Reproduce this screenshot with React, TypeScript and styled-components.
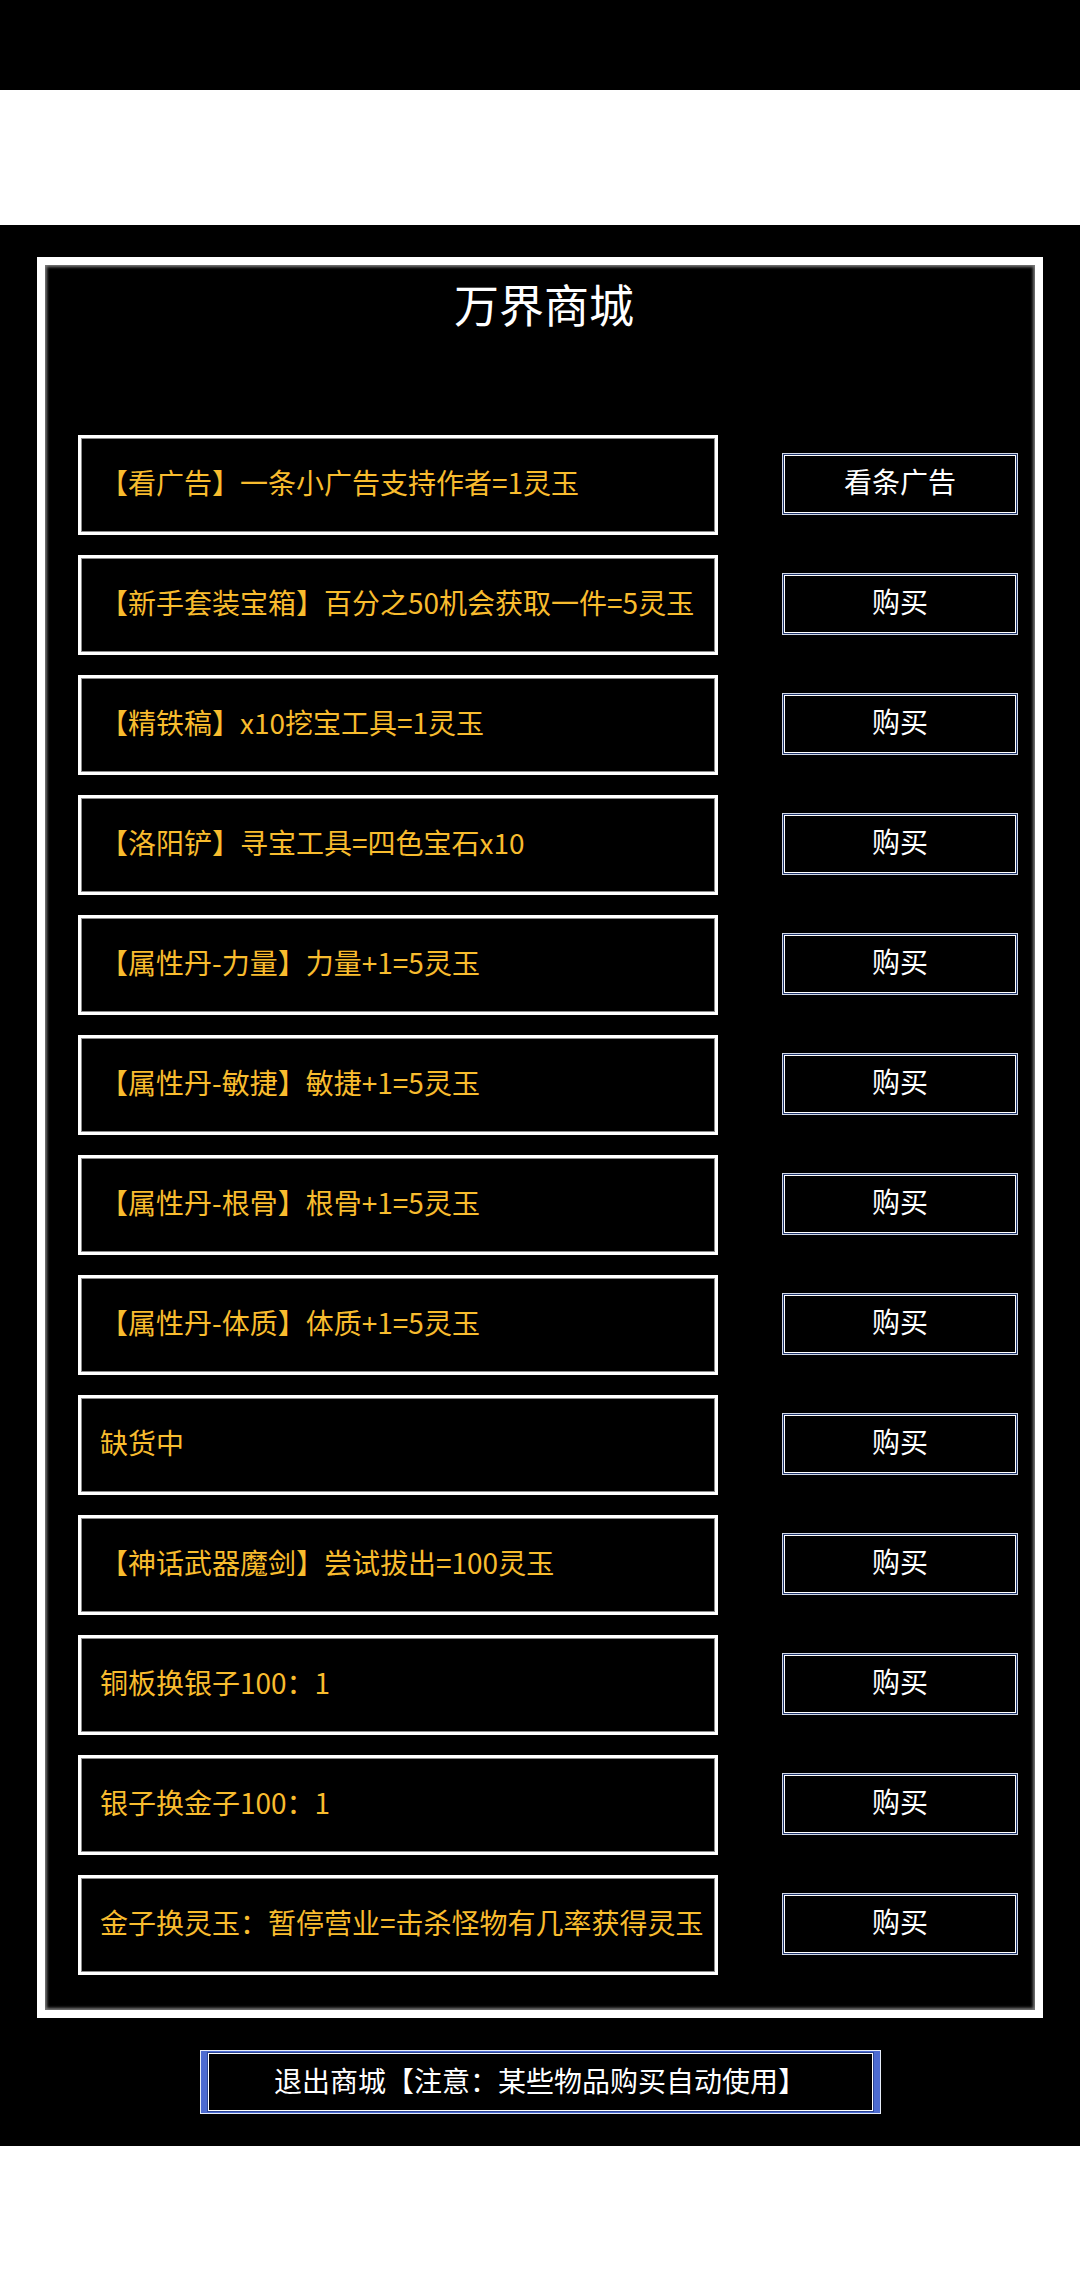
import React from 'react';
import styled, { createGlobalStyle } from 'styled-components';

const GlobalStyle = createGlobalStyle`
  html, body {
    margin: 0;
    padding: 0;
    background: #ffffff;
  }
  body {
    font-family: "Noto Sans CJK SC", "Noto Sans", sans-serif;
  }
  * {
    box-sizing: border-box;
  }
`;

interface IShopItem {
  id: number;
  descricao: string;
  acao: string;
}

const itens: IShopItem[] = [
  { id: 1, descricao: '【看广告】一条小广告支持作者=1灵玉', acao: '看条广告' },
  { id: 2, descricao: '【新手套装宝箱】百分之50机会获取一件=5灵玉', acao: '购买' },
  { id: 3, descricao: '【精铁稿】x10挖宝工具=1灵玉', acao: '购买' },
  { id: 4, descricao: '【洛阳铲】寻宝工具=四色宝石x10', acao: '购买' },
  { id: 5, descricao: '【属性丹-力量】力量+1=5灵玉', acao: '购买' },
  { id: 6, descricao: '【属性丹-敏捷】敏捷+1=5灵玉', acao: '购买' },
  { id: 7, descricao: '【属性丹-根骨】根骨+1=5灵玉', acao: '购买' },
  { id: 8, descricao: '【属性丹-体质】体质+1=5灵玉', acao: '购买' },
  { id: 9, descricao: '缺货中', acao: '购买' },
  { id: 10, descricao: '【神话武器魔剑】尝试拔出=100灵玉', acao: '购买' },
  { id: 11, descricao: '铜板换银子100：1', acao: '购买' },
  { id: 12, descricao: '银子换金子100：1', acao: '购买' },
  { id: 13, descricao: '金子换灵玉：暂停营业=击杀怪物有几率获得灵玉', acao: '购买' },
];

const App: React.FC = () => {
  return (
    <>
      <GlobalStyle />
      <StatusBar />
      <ToolbarBlank />
      <Screen>
        <Panel>
          <Title>万界商城</Title>
          <ItemList>
            {itens.map((item) => (
              <ItemRow key={item.id}>
                <ItemBox>
                  <ItemText>{item.descricao}</ItemText>
                </ItemBox>
                <BuyButton>{item.acao}</BuyButton>
              </ItemRow>
            ))}
          </ItemList>
        </Panel>
        <ExitButton>退出商城【注意：某些物品购买自动使用】</ExitButton>
      </Screen>
    </>
  );
};

const StatusBar = styled.div`
  height: 90px;
  background: #000000;
`;

const ToolbarBlank = styled.div`
  height: 135px;
  background: #ffffff;
`;

const Screen = styled.div`
  background: #000000;
  padding: 32px 37px 33px;
  display: flex;
  flex-direction: column;
  align-items: center;
`;

const Panel = styled.div`
  width: 100%;
  border: 8px solid #ffffff;
  background: #000000;
  box-shadow: inset 0 0 3px 2px #7a7a7a;
  padding: 0 17px 35px 33px;
  display: flex;
  flex-direction: column;
`;

const Title = styled.h1`
  margin: 0 8px 0 0;
  height: 80px;
  line-height: 78px;
  text-align: center;
  color: #ffffff;
  font-size: 45px;
  font-weight: 400;
`;

const ItemList = styled.div`
  margin-top: 90px;
  display: flex;
  flex-direction: column;
  gap: 20px;
`;

const ItemRow = styled.div`
  display: flex;
  align-items: center;
  justify-content: space-between;
  height: 100px;
`;

const ItemBox = styled.div`
  width: 640px;
  height: 100px;
  border: 3px solid #ffffff;
  box-shadow: inset 0 0 0 1px #8a8a8a;
  display: flex;
  align-items: center;
  padding: 0 0 7px 19px;
`;

const ItemText = styled.span`
  color: #f8bc2e;
  font-size: 28px;
  white-space: nowrap;
`;

const BuyButton = styled.button`
  width: 236px;
  height: 62px;
  margin-top: -3px;
  background: #000000;
  color: #ffffff;
  font-family: "Noto Sans CJK SC", "Noto Sans", sans-serif;
  font-size: 28px;
  padding: 0 0 6px;
  border: 1px solid #cfd7e8;
  box-shadow: inset 0 0 0 1px #1e3368, inset 0 0 0 2px #ffffff;
`;

const ExitButton = styled.button`
  margin-top: 33px;
  width: 679px;
  height: 62px;
  background: #000000;
  color: #ffffff;
  font-family: "Noto Sans CJK SC", "Noto Sans", sans-serif;
  font-size: 28px;
  padding: 0 0 5px;
  border-style: solid;
  border-color: #4d6bd0;
  border-width: 1px 6px;
  outline: 1px solid #e6ecf8;
  box-shadow: inset 0 0 0 1px #2c4696, inset 0 0 0 2px #ffffff;
`;

export default App;
